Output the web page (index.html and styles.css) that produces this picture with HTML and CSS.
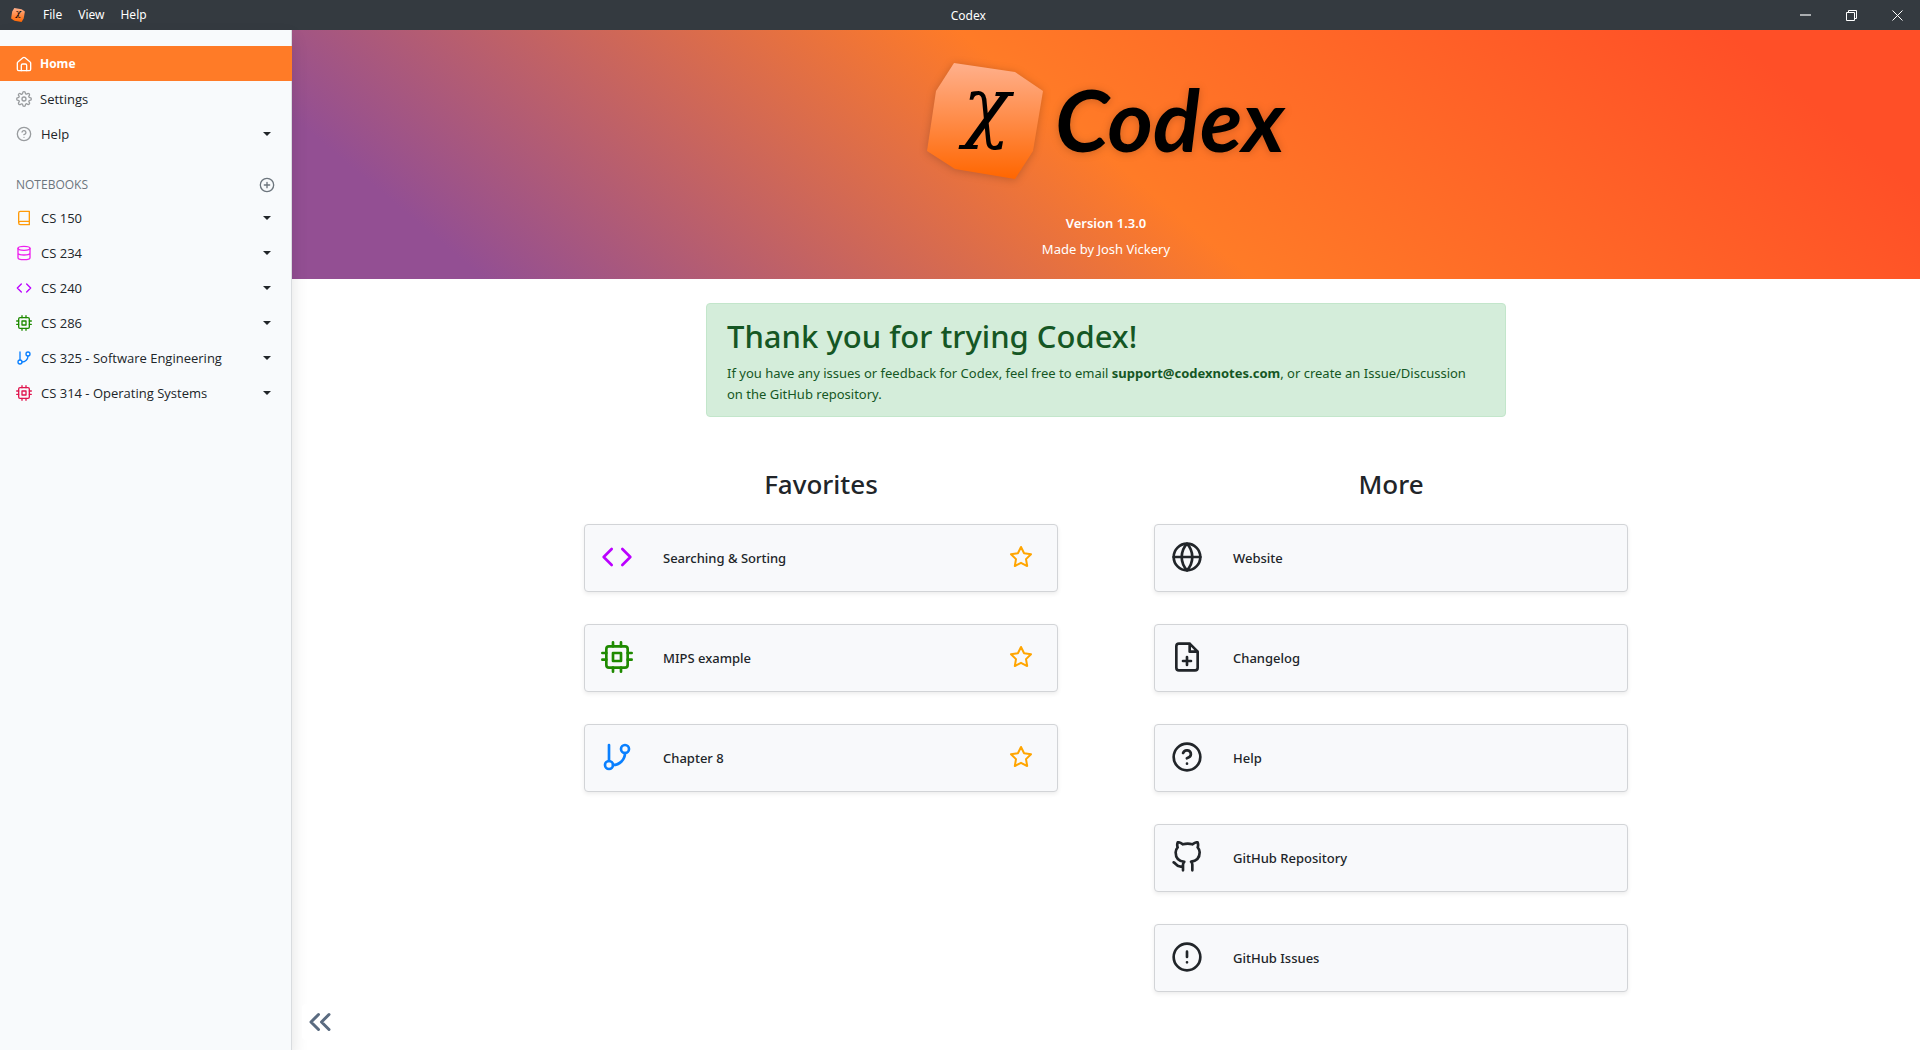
FILE: index.html
```html
<!DOCTYPE html>
<html lang="en">
<head>
<meta charset="utf-8">
<meta name="viewport" content="width=device-width, initial-scale=1">
<title>Codex</title>
<link rel="stylesheet" href="styles.css">
</head>
<body>
<svg class="sprite" aria-hidden="true">
  <defs>
    <linearGradient id="stone" x1="0" y1="0" x2="0" y2="1">
      <stop offset="0" stop-color="#ffb08c"/>
      <stop offset="0.5" stop-color="#ff8b47"/>
      <stop offset="1" stop-color="#ff6600"/>
    </linearGradient>
  </defs>
  <symbol id="i-home" viewBox="0 0 24 24"><path d="M2 10.5a2 2 0 0 1 .8-1.6l7.6-6.2a2.5 2.5 0 0 1 3.2 0l7.6 6.2a2 2 0 0 1 .8 1.6V20a2 2 0 0 1-2 2H4a2 2 0 0 1-2-2z"/><path d="M8 22v-8a2 2 0 0 1 2-2h4a2 2 0 0 1 2 2v8"/></symbol>
  <symbol id="i-settings" viewBox="0 0 24 24"><circle cx="12" cy="12" r="3"/><path d="M19.4 15a1.65 1.65 0 0 0 .33 1.82l.06.06a2 2 0 1 1-2.83 2.83l-.06-.06a1.65 1.65 0 0 0-2.8 1.18V21a2 2 0 0 1-4 0v-.09A1.65 1.65 0 0 0 9 19.4a1.65 1.65 0 0 0-1.82.33l-.06.06a2 2 0 1 1-2.83-2.83l.06-.06A1.65 1.65 0 0 0 3.17 14H3a2 2 0 0 1 0-4h.09A1.65 1.65 0 0 0 4.6 9a1.65 1.65 0 0 0-.33-1.82l-.06-.06a2 2 0 1 1 2.83-2.83l.06.06A1.65 1.65 0 0 0 9 4.6a1.65 1.65 0 0 0 1-1.51V3a2 2 0 0 1 4 0v.09a1.65 1.65 0 0 0 2.82 1.17l.06-.06a2 2 0 1 1 2.83 2.83l-.06.06A1.65 1.65 0 0 0 19.4 9a1.65 1.65 0 0 0 1.51 1H21a2 2 0 0 1 0 4h-.09a1.65 1.65 0 0 0-1.51 1z"/></symbol>
  <symbol id="i-help" viewBox="0 0 24 24"><circle cx="12" cy="12" r="10"/><path d="M9.09 9a3 3 0 0 1 5.83 1c0 2-3 3-3 3M12 17h.01"/></symbol>
  <symbol id="i-plus" viewBox="0 0 24 24"><circle cx="12" cy="12" r="10"/><path d="M12 8v8M8 12h8"/></symbol>
  <symbol id="i-book" viewBox="0 0 24 24"><path d="M4 19.500A2.500 2.500 0 0 1 6.500 17H20M6.500 2H20v20H6.500A2.500 2.500 0 0 1 4 19.500v-15A2.500 2.500 0 0 1 6.500 2z"/></symbol>
  <symbol id="i-database" viewBox="0 0 24 24"><ellipse cx="12" cy="5" rx="9" ry="3"/><path d="M21 12c0 1.660-4 3-9 3s-9-1.340-9-3M3 5v14c0 1.660 4 3 9 3s9-1.340 9-3V5"/></symbol>
  <symbol id="i-code" viewBox="0 0 24 24"><path d="M16 18l6-6-6-6M8 6l-6 6 6 6"/></symbol>
  <symbol id="i-cpu" viewBox="0 0 24 24"><rect x="4" y="4" width="16" height="16" rx="2"/><rect x="9" y="9" width="6" height="6"/><path d="M9 1v3M15 1v3M9 20v3M15 20v3M20 9h3M20 14h3M1 9h3M1 14h3"/></symbol>
  <symbol id="i-branch" viewBox="0 0 24 24"><path d="M6 3v12"/><circle cx="18" cy="6" r="3"/><circle cx="6" cy="18" r="3"/><path d="M18 9a9 9 0 0 1-9 9"/></symbol>
  <symbol id="i-star" viewBox="0 0 24 24"><path d="M12 2l3.090 6.260L22 9.270l-5 4.870 1.180 6.880L12 17.770l-6.180 3.250L7 14.140 2 9.270l6.910-1.010z"/></symbol>
  <symbol id="i-globe" viewBox="0 0 24 24"><circle cx="12" cy="12" r="10"/><path d="M2 12h20M12 2a15.300 15.300 0 0 1 4 10 15.300 15.300 0 0 1-4 10 15.300 15.300 0 0 1-4-10 15.300 15.300 0 0 1 4-10z"/></symbol>
  <symbol id="i-file" viewBox="0 0 24 24"><path d="M14 2H6a2 2 0 0 0-2 2v16a2 2 0 0 0 2 2h12a2 2 0 0 0 2-2V8zM14 2v6h6M12 12v6M9 15h6"/></symbol>
  <symbol id="i-github" viewBox="0 0 24 24"><path d="M9 19c-5 1.500-5-2.500-7-3m14 6v-3.870a3.370 3.370 0 0 0-.94-2.610c3.140-.35 6.440-1.540 6.440-7A5.440 5.440 0 0 0 20 4.770 5.070 5.070 0 0 0 19.910 1S18.730.65 16 2.480a13.380 13.380 0 0 0-7 0C6.270.65 5.090 1 5.090 1A5.070 5.070 0 0 0 5 4.770a5.440 5.440 0 0 0-1.500 3.780c0 5.420 3.300 6.610 6.440 7A3.370 3.370 0 0 0 9 18.130V22"/></symbol>
  <symbol id="i-alert" viewBox="0 0 24 24"><circle cx="12" cy="12" r="10"/><path d="M12 8v4M12 16h.01"/></symbol>
  <symbol id="i-collapse" viewBox="0 0 24 24"><path d="M11 17l-5-5 5-5M18 17l-5-5 5-5"/></symbol>
</svg>

<header class="titlebar">
  <svg class="app-icon" viewBox="0 0 118 118" aria-hidden="true"><path fill="url(#stone)" d="M28 1L89 10l28 19-10 60-18 28-60-10L1 89l9-60z"/><text class="chi" x="37" y="71">χ</text></svg>
  <nav class="menu" aria-label="Application menu">
    <button type="button">File</button><button type="button">View</button><button type="button">Help</button>
  </nav>
  <span class="window-title">Codex</span>
  <div class="window-controls">
    <button type="button" aria-label="Minimize"><svg viewBox="0 0 11 11"><path stroke="#aaadb0" stroke-width="2" d="M0 5h11"/></svg></button>
    <button type="button" aria-label="Restore"><svg viewBox="0 0 11 11"><path d="M.5 2.500h8v8h-8zM2.500 2.500v-2h8v8h-2"/></svg></button>
    <button type="button" aria-label="Close"><svg viewBox="0 0 11 11"><path d="M.5.5l10 10M10.500.5l-10 10"/></svg></button>
  </div>
</header>

<div class="shell">
  <aside class="sidebar">
    <nav aria-label="Main">
      <a class="row plain active" href="#home"><svg class="icon"><use href="#i-home"/></svg>Home</a>
      <a class="row plain" href="#settings"><svg class="icon muted"><use href="#i-settings"/></svg>Settings</a>
      <a class="row" href="#help"><svg class="icon muted"><use href="#i-help"/></svg>Help<span class="caret"></span></a>
    </nav>
    <div class="section-head">
      <h2>NOTEBOOKS</h2>
      <button type="button" aria-label="Add notebook"><svg class="icon"><use href="#i-plus"/></svg></button>
    </div>
    <nav aria-label="Notebooks">
      <a class="row" href="#cs150"><svg class="icon amber"><use href="#i-book"/></svg>CS 150<span class="caret"></span></a>
      <a class="row" href="#cs234"><svg class="icon pink"><use href="#i-database"/></svg>CS 234<span class="caret"></span></a>
      <a class="row" href="#cs240"><svg class="icon violet"><use href="#i-code"/></svg>CS 240<span class="caret"></span></a>
      <a class="row" href="#cs286"><svg class="icon green"><use href="#i-cpu"/></svg>CS 286<span class="caret"></span></a>
      <a class="row" href="#cs325"><svg class="icon blue"><use href="#i-branch"/></svg>CS 325 - Software Engineering<span class="caret"></span></a>
      <a class="row" href="#cs314"><svg class="icon red"><use href="#i-cpu"/></svg>CS 314 - Operating Systems<span class="caret"></span></a>
    </nav>
  </aside>

  <main class="content">
    <section class="banner">
      <svg class="logo" viewBox="0 0 360 118" role="img" aria-label="Codex">
        <path fill="url(#stone)" d="M28 1L89 10l28 19-10 60-18 28-60-10L1 89l9-60z"/>
        <text class="chi" x="37" y="71">χ</text>
        <text class="wordmark" x="129" y="90">Codex</text>
      </svg>
      <p class="version">Version 1.3.0</p>
      <p>Made by Josh Vickery</p>
    </section>

    <section class="alert">
      <h1>Thank you for trying Codex!</h1>
      <p>If you have any issues or feedback for Codex, feel free to email <strong>support@codexnotes.com</strong>, or create an Issue/Discussion on the GitHub repository.</p>
    </section>

    <div class="columns">
      <section>
        <h2>Favorites</h2>
        <a class="card" href="#searching"><svg class="icon violet"><use href="#i-code"/></svg>Searching &amp; Sorting<svg class="star"><use href="#i-star"/></svg></a>
        <a class="card" href="#mips"><svg class="icon green"><use href="#i-cpu"/></svg>MIPS example<svg class="star"><use href="#i-star"/></svg></a>
        <a class="card" href="#chapter8"><svg class="icon blue"><use href="#i-branch"/></svg>Chapter 8<svg class="star"><use href="#i-star"/></svg></a>
      </section>
      <section>
        <h2>More</h2>
        <a class="card" href="#website"><svg class="icon"><use href="#i-globe"/></svg>Website</a>
        <a class="card" href="#changelog"><svg class="icon"><use href="#i-file"/></svg>Changelog</a>
        <a class="card" href="#help-docs"><svg class="icon"><use href="#i-help"/></svg>Help</a>
        <a class="card" href="#repository"><svg class="icon"><use href="#i-github"/></svg>GitHub Repository</a>
        <a class="card" href="#issues"><svg class="icon"><use href="#i-alert"/></svg>GitHub Issues</a>
      </section>
    </div>
    <button class="collapse" type="button" aria-label="Collapse sidebar"><svg><use href="#i-collapse"/></svg></button>
  </main>
</div>
</body>
</html>
```
FILE: styles.css
```css
* { box-sizing: border-box; }

body {
  margin: 0;
  min-height: 100vh;
  display: flex;
  flex-direction: column;
  background: #fff;
  color: #212529;
  font-family: "Noto Sans", "Open Sans", sans-serif;
  font-size: 13px;
}

h1, h2, p { margin: 0; font-weight: 500; }
a { color: inherit; text-decoration: none; }
button { margin: 0; padding: 0; border: 0; background: none; color: inherit; font: inherit; }

svg {
  display: block;
  flex: none;
  fill: none;
  stroke: currentColor;
  stroke-width: 2;
  stroke-linecap: round;
  stroke-linejoin: round;
}
.sprite { position: absolute; width: 0; height: 0; }

.amber { color: #ff9b0a; }
.pink { color: #ee22ee; }
.violet { color: #bb00ff; }
.green { color: #1f8a00; }
.blue { color: #0a80ff; }
.red { color: #e0164f; }

/* Window title bar */
.titlebar {
  display: flex;
  align-items: center;
  height: 30px;
  padding-left: 11px;
  background: #343a40;
  color: #fff;
  font-size: 12px;
}
.app-icon { width: 14px; height: 14px; stroke: none; }
.menu { display: flex; margin-left: 10px; }
.menu button { padding: 0 8px; line-height: 30px; }
.window-title { flex: 1; text-align: center; }
.window-controls { display: flex; }
.window-controls button { display: grid; place-items: center; width: 46px; height: 30px; }
.window-controls svg { width: 11px; height: 11px; stroke-width: 1; stroke-linecap: butt; stroke-linejoin: miter; }

.shell { flex: 1; display: flex; }

/* Sidebar */
.sidebar {
  flex: none;
  width: 292px;
  padding-top: 16px;
  border-right: 1px solid #d9dcdf;
  background: #f8fafc;
  box-shadow: 0 8px 16px rgba(0, 0, 0, 0.12);
  font-family: "Open Sans", "Noto Sans", sans-serif;
  z-index: 1;
}
.sidebar .icon { width: 16px; height: 16px; }
.row {
  display: flex;
  align-items: center;
  gap: 9px;
  height: 35px;
  padding: 0 20px 0 16px;
}
.row.plain { gap: 8px; }
.row.active {
  margin-right: -1px;
  background: #ff7b27;
  color: #fff;
  font-size: 12px;
  font-weight: 700;
}
.muted { color: #999c9f; }
.caret {
  margin-left: auto;
  border: 4px solid transparent;
  border-top-color: #212529;
  border-bottom: 0;
}
.section-head {
  display: flex;
  align-items: center;
  justify-content: space-between;
  height: 31px;
  margin-top: 18px;
  padding: 0 16px;
  color: #6c757d;
}
.section-head h2 { font-size: 12px; font-weight: 400; }

/* Main content */
.content { flex: 1; min-width: 0; position: relative; }

.banner {
  display: flex;
  flex-direction: column;
  align-items: center;
  padding: 32px 16px 17px;
  background: linear-gradient(40deg, #934f93 10%, #ff7b27 50%, #ff4f27 90%);
  color: #fff;
  line-height: 26px;
}
.banner p { font-weight: 400; }
.logo {
  width: 360px;
  height: 118px;
  margin-bottom: 30px;
  overflow: visible;
  stroke: none;
  filter: drop-shadow(0 1px 4px rgba(0, 0, 0, 0.2));
}
.chi { fill: #000; font: italic 78px "DejaVu Serif", serif; }
.wordmark { fill: #000; font: italic 700 87px Lato, sans-serif; }
.banner .version { font-weight: 600; }

.alert {
  max-width: 800px;
  margin: 24px auto 0;
  padding: 12px 20px 11px;
  border: 1px solid #c3e6cb;
  border-radius: 4px;
  background: #d4edda;
  color: #155724;
}
.alert h1 { font-size: 31px; line-height: 40px; }
.alert p { margin-top: 7px; font-weight: 400; line-height: 21px; }

.columns {
  display: grid;
  grid-template-columns: 1fr 1fr;
  gap: 96px;
  max-width: 1140px;
  margin: 51px auto 0;
  padding: 0 48px 56px;
}
.columns h2 { margin-bottom: 24px; font-size: 26px; line-height: 32px; text-align: center; }
.card {
  display: flex;
  align-items: center;
  height: 68px;
  margin-bottom: 32px;
  padding: 0 24px 0 16px;
  border: 1px solid #d2d4d7;
  border-radius: 4px;
  background: #f8f9fb;
  box-shadow: 0 2px 4px rgba(0, 0, 0, 0.075);
  font-weight: 500;
}
.card:last-child { margin-bottom: 0; }
.card svg { margin-bottom: 2px; }
.card .icon { width: 32px; height: 32px; margin-right: 30px; }
.star { width: 24px; height: 24px; margin-left: auto; color: #ffa500; }

.collapse {
  position: absolute;
  left: 10px;
  bottom: 10px;
  border-radius: 4px;
  background: #fff;
  color: #5a6b80;
  z-index: 2;
}
.collapse svg { width: 36px; height: 36px; }
```
